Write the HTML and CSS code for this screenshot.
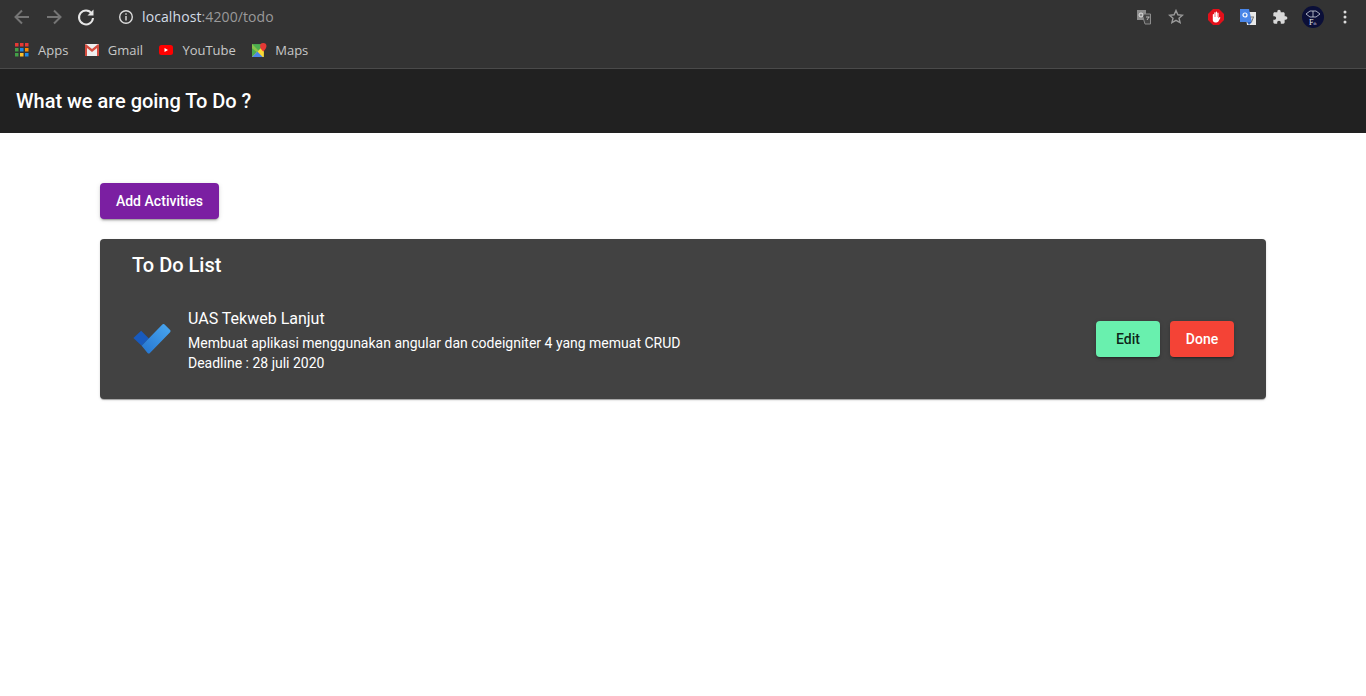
FILE: index.html
```html
<!DOCTYPE html>
<html lang="en">
<head>
<meta charset="utf-8">
<title>Todo</title>
<link rel="stylesheet" href="styles.css">
</head>
<body>
<header class="chrome">
  <div class="nav-row">
    <div class="nav-left">
      <svg class="ic" viewBox="0 0 20 20"><path d="M17 10H4.500M10 3.500 3.500 10l6.500 6.500" fill="none" stroke="#757575" stroke-width="2"/></svg>
      <svg class="ic" viewBox="0 0 20 20"><path d="M3 10h12.500M10 3.500l6.500 6.500-6.500 6.500" fill="none" stroke="#757575" stroke-width="2"/></svg>
      <svg class="ic" viewBox="0 0 20 20"><path d="M15.700 6.300A7 7 0 1 0 17 11" fill="none" stroke="#e6e6e6" stroke-width="2"/><path d="M17.500 2.500v6h-6z" fill="#e6e6e6"/></svg>
    </div>
    <svg class="info" viewBox="0 0 16 16"><circle cx="8" cy="8" r="6.300" fill="none" stroke="#dcdcdc" stroke-width="1.400"/><path d="M7.300 7h1.400v4.500H7.300zM7.300 4.300h1.400v1.500H7.300z" fill="#dcdcdc"/></svg>
    <div class="url"><span class="host">localhost</span><span class="port">:4200/todo</span></div>
    <div class="nav-right">
      <svg class="ext tr-gray" viewBox="0 0 16 16"><rect x="1" y="1" width="9" height="10" fill="#8c8c8c"/><path d="M6 5h8.500v10H9z" fill="#444" stroke="#8c8c8c"/><circle cx="5" cy="6" r="2" fill="none" stroke="#e0e0e0"/><path d="M10 8h3.500M11 11l2-3" stroke="#b5b5b5"/></svg>
      <svg class="ext star" viewBox="0 0 16 16"><path d="m8 1.500 1.900 4.300 4.600.4-3.500 3 1.100 4.500L8 11.400l-4.100 2.300 1.100-4.500-3.500-3 4.600-.4z" fill="none" stroke="#9a9a9a" stroke-width="1.400"/></svg>
      <svg class="ext stop" viewBox="0 0 16 16"><path d="M5 0h6l5 5v6l-5 5H5l-5-5V5z" fill="#e3101a"/><path d="M4.800 5.500a.6.6 0 0 1 1.200 0V8h.3V3.800a.6.6 0 0 1 1.200 0V8h.3V3.200a.6.6 0 0 1 1.200 0V8h.3V4.200a.6.6 0 0 1 1.200 0v5.300l.8-1.200a.6.600 0 0 1 1 .6l-1.800 3.400c-.4.700-1 1.200-2 1.200H7.300c-1.500 0-2.500-1-2.500-2.500z" fill="#fff"/></svg>
      <svg class="ext gt" viewBox="0 0 16 16"><path d="M5 3h11v13H7z" fill="#e8e8e8"/><path d="M0 0h9l3 13H0z" fill="#4a86e8"/><path d="M7 13h5l-3 3z" fill="#2f5fb3"/><circle cx="5" cy="6" r="2" fill="none" stroke="#fff" stroke-width="1.200"/><path d="M10.500 8h3.500M11.500 13l2-5" stroke="#777"/></svg>
      <svg class="ext puzzle" viewBox="0 0 24 24"><path d="M20.500 11H19V7c0-1.100-.9-2-2-2h-4V3.500C13 2.120 11.880 1 10.500 1S8 2.120 8 3.500V5H4c-1.100 0-1.990.9-1.990 2v3.800H3.500c1.490 0 2.700 1.210 2.700 2.700s-1.210 2.700-2.700 2.700H2V20c0 1.100.9 2 2 2h3.800v-1.500c0-1.490 1.210-2.700 2.700-2.700 1.490 0 2.700 1.210 2.700 2.700V22H17c1.100 0 2-.9 2-2v-4h1.500c1.380 0 2.500-1.120 2.500-2.500S21.880 11 20.500 11z" fill="#d8d8d8"/></svg>
      <span class="avatar"><svg viewBox="0 0 22 22"><path d="M4 8 8 5h6l4 3-4 3H8zM11 5v6" fill="none" stroke="#cfd3e0" stroke-width=".8"/><text class="av-f" x="7" y="19">F</text><text class="av-s" x="11.500" y="19">th</text></svg></span>
      <svg class="kebab" viewBox="0 0 4 16"><circle cx="2" cy="3" r="1.500" fill="#dcdcdc"/><circle cx="2" cy="8" r="1.500" fill="#dcdcdc"/><circle cx="2" cy="13" r="1.500" fill="#dcdcdc"/></svg>
    </div>
  </div>
  <div class="bookmarks">
    <a class="bm">
      <svg class="bm-ic" viewBox="0 0 14 14"><rect x="0" y="0" width="3.500" height="3.500" fill="#e53935"/><rect x="5" y="0" width="3.500" height="3.500" fill="#e53935"/><rect x="10" y="0" width="3.500" height="3.500" fill="#e53935"/><rect x="0" y="5" width="3.500" height="3.500" fill="#43a047"/><rect x="5" y="5" width="3.500" height="3.500" fill="#1e88e5"/><rect x="10" y="5" width="3.500" height="3.500" fill="#fb8c00"/><rect x="0" y="10" width="3.500" height="3.500" fill="#43a047"/><rect x="5" y="10" width="3.500" height="3.500" fill="#fbc02d"/><rect x="10" y="10" width="3.500" height="3.500" fill="#1e88e5"/></svg>
      Apps
    </a>
    <a class="bm">
      <svg class="bm-ic" viewBox="0 0 14 12"><rect width="14" height="12" rx="1" fill="#eeeeee"/><path d="M0 1v11h2V4l5 4 5-4v8h2V1l-.8-1L7 5 .8 0z" fill="#d54c3f"/></svg>
      Gmail
    </a>
    <a class="bm">
      <svg class="bm-ic" viewBox="0 0 14 10"><rect width="14" height="10" rx="2.500" fill="#f00"/><path d="M5.500 3v4L9 5z" fill="#fff"/></svg>
      YouTube
    </a>
    <a class="bm bm-last">
      <svg class="bm-maps" viewBox="0 0 14 14"><path d="M0 1h11v12H0z" fill="#4caf50"/><path d="M0 13 11 2v11z" fill="#fdd835"/><path d="M0 13l5-5 5 5z" fill="#4a86e8"/><path d="M0 1l6 6-1.500 1.500L0 5z" fill="#8bc34a"/><path d="M10.500 0a3 3 0 0 1 3 3c0 2-3 5-3 5s-3-3-3-5a3 3 0 0 1 3-3z" fill="#e53935"/></svg>
      Maps
    </a>
  </div>
</header>
<div class="app-bar">What we are going To Do ?</div>
<main class="content">
  <button class="btn btn-add">Add Activities</button>
  <section class="card">
    <h2 class="card-title">To Do List</h2>
    <div class="item">
      <svg class="todo-ic" viewBox="2 2 36 29"><defs><linearGradient id="tick" x1="0" y1="1" x2="1" y2="0"><stop offset="0" stop-color="#2474d0"/><stop offset="1" stop-color="#4aa8f0"/></linearGradient></defs><path d="M2 15.500 9.500 8.500 17 16l-7 7z" fill="#185abd"/><path d="M10 23 30 2.500c.7-.7 1.600-.7 2.200 0l5.300 5.300c.6.6.6 1.500 0 2.100L18 30c-.7.700-1.600.700-2.300 0z" fill="url(#tick)"/></svg>
      <div class="item-text">
        <div class="item-title">UAS Tekweb Lanjut</div>
        <div class="item-line">Membuat aplikasi menggunakan angular dan codeigniter 4 yang memuat CRUD</div>
        <div class="item-line">Deadline : 28 juli 2020</div>
      </div>
      <div class="actions">
        <button class="btn btn-edit">Edit</button>
        <button class="btn btn-done">Done</button>
      </div>
    </div>
  </section>
</main>
</body>
</html>
```
FILE: styles.css
```css
* { box-sizing: border-box; }
html, body { margin: 0; height: 100%; background: #fff; }
body { font-family: Roboto, sans-serif; overflow: hidden; }

.chrome { height: 69px; background: #333333; border-bottom: 1px solid #4a4a4a; display: flex; flex-direction: column; }
.nav-row { height: 33px; display: flex; align-items: center; padding-left: 12px; }
.nav-left { display: flex; gap: 12px; }
.ic { width: 20px; height: 20px; display: block; }
.info { width: 16px; height: 16px; margin-left: 22px; }
.url { font-family: "Open Sans", sans-serif; font-size: 14px; margin-left: 8px; letter-spacing: 0.1px; }
.host { color: #d4dde6; }
.port { color: #9a9a9a; }
.nav-right { margin-left: auto; display: flex; align-items: center; padding-right: 19px; }
.ext { width: 16px; height: 16px; display: block; }
.star { margin-left: 16px; }
.stop { margin-left: 24px; }
.gt { margin-left: 16px; }
.puzzle { margin-left: 16px; }
.avatar { width: 22px; height: 22px; border-radius: 50%; background: #0b0f38; margin-left: 14px; display: block; }
.avatar svg { width: 22px; height: 22px; display: block; }
.av-f { font-family: "Liberation Serif", serif; font-size: 8px; fill: #e5e7ef; }
.av-s { font-family: "Liberation Serif", serif; font-size: 4px; fill: #cfd3e0; }
.kebab { width: 4px; height: 16px; margin-left: 19px; display: block; }

.bookmarks { height: 34px; display: flex; align-items: center; padding-left: 15px; gap: 16.4px; }
.bm { display: flex; align-items: center; gap: 9px; font-family: "Open Sans", sans-serif; font-size: 13px; color: #c8c8c8; }
.bm-last { gap: 8px; }
.bm-ic { width: 14px; height: 14px; display: block; }
.bm-maps { width: 15px; height: 15px; display: block; }

.app-bar { height: 64px; background: #212121; color: #fff; font-size: 20px; font-weight: 500; letter-spacing: -0.03px; display: flex; align-items: center; padding: 0 16px; }

.content { padding: 50px 100px; display: flex; flex-direction: column; align-items: stretch; gap: 20px; }
.btn { height: 36px; border: 0; border-radius: 4px; font-family: Roboto, sans-serif; font-size: 14px; font-weight: 457; letter-spacing: 0.03px; padding: 0 12px; width: 64px; box-shadow: 0 3px 1px -2px rgba(0,0,0,.2), 0 2px 2px 0 rgba(0,0,0,.14), 0 1px 5px 0 rgba(0,0,0,.12); }
.btn-add { align-self: flex-start; background: #7b1fa2; color: #fff; width: 119px; }
.btn-edit { background: #69f0ae; color: rgba(0,0,0,.87); }
.btn-done { background: #f44336; color: #fff; }

.card { height: 160px; background: #424242; border-radius: 4px; padding: 0 32px; color: #fff; box-shadow: 0 2px 1px -1px rgba(0,0,0,.2), 0 1px 1px 0 rgba(0,0,0,.14), 0 1px 3px 0 rgba(0,0,0,.12); }
.card-title { margin: 0; padding-top: 14px; font-size: 20px; line-height: 24px; font-weight: 500; }
.item { display: flex; align-items: center; height: 64px; margin-top: 30px; }
.todo-ic { width: 38px; height: 30px; display: block; margin: 0 17px 0 1px; }
.item-text { flex: 1; padding-top: 4px; }
.item-title { font-size: 16px; line-height: 20px; }
.item-line { font-size: 14px; line-height: 20px; }
.item-title + .item-line { margin-top: 4px; }
.actions { display: flex; gap: 10px; }
```
